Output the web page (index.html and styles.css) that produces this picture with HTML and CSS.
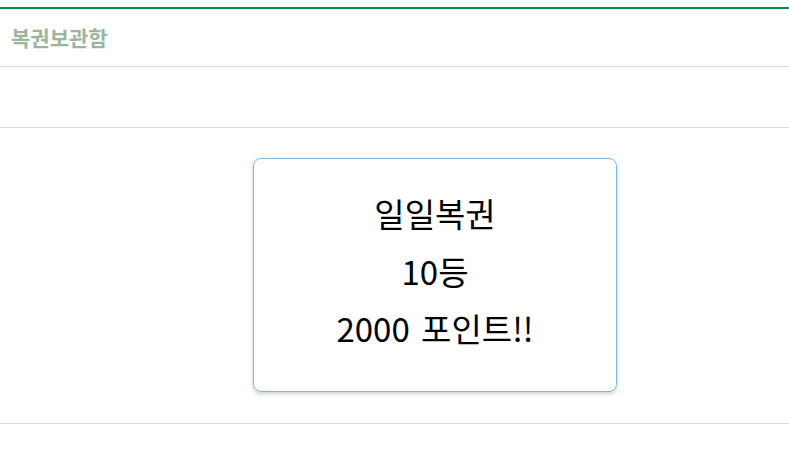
FILE: index.html
```html
<!DOCTYPE html>
<html>
<head>
  <meta charset="utf-8">
  <meta name="viewport" content="width=device-width">
  <title>복권보관함</title>
  <link rel="stylesheet" href="styles.css">
</head>
<body>
  <div class="header">
    <h1 class="title">복권보관함</h1>
  </div>
  <div class="toolbar"></div>
  <div class="list">
    <div class="ticket">
      <p>일일복권</p>
      <p>10등</p>
      <p>2000 포인트!!</p>
    </div>
  </div>
</body>
</html>
```

FILE: styles.css
```css
* {
  box-sizing: border-box;
}

html, body, h1, p {
  margin: 0;
  padding: 0;
}

body {
  background-color: #fff;
  color: #000;
  font-family: 'Noto Sans CJK KR', 'Noto Sans', sans-serif;
  padding-top: 7px;
}

.header {
  border-top: 2px solid #00913f;
  border-bottom: 1px solid #cfd6e4;
  height: 60px;
  display: flex;
  align-items: center;
  padding-left: 11px;
}

.title {
  font-size: 21px;
  font-weight: bold;
  color: #9bb59b;
  line-height: 1;
}

.toolbar {
  height: 61px;
  border-bottom: 1px solid #dcdcdc;
}

.list {
  padding: 30px 0 31px 253px;
  border-bottom: 1px solid #dcdcdc;
}

.ticket {
  width: 364px;
  height: 234px;
  border: 1px solid #7ab8e6;
  border-radius: 8px;
  box-shadow: 0 2px 4px rgba(0, 0, 0, 0.2);
  padding-top: 26px;
  text-align: center;
  font-size: 33px;
  line-height: 57.5px;
  word-spacing: 4px;
}
```
